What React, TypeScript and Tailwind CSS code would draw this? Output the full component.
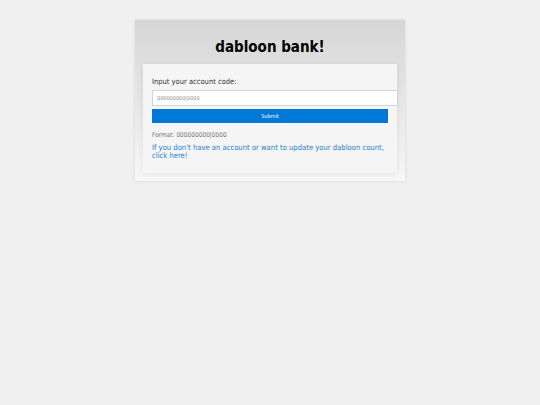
export default function App() {
  return (
    <div className="min-h-[405px] w-full bg-[#f0f0f0] pt-[20px] font-['DejaVu_Sans_Condensed','DejaVu_Sans',sans-serif]">
      <div className="mx-auto w-[270px] bg-gradient-to-b from-[#d6d6d6] to-[#f7f7f7] pt-[18px] pb-[8px] px-[8px] shadow-[0_0_3px_rgba(0,0,0,0.12)]">
        <h1 className="text-center text-[15px] leading-[19px] font-bold text-black">dabloon bank!</h1>
        <div className="mt-[7px] bg-[#f5f5f5] px-[9px] pt-[12px] pb-[13px] shadow-[0_1px_6px_rgba(0,0,0,0.08)]">
          <label className="block text-[7.5px] leading-[11px] text-[#333]">Input your account code:</label>
          <input
            type="text"
            placeholder="000000000|0000"
            className="mt-[3px] box-content block h-[14px] w-full border border-[#d4d4d4] bg-white px-[4px] text-[5.5px] text-[#555] placeholder:text-[#888] outline-none"
          />
          <button className="mt-[3px] block h-[14px] w-full bg-[#0078d7] text-[5.5px] text-white">Submit</button>
          <p className="mt-[8px] text-[6.5px] leading-[8px] text-[#777]">Format: 000000000|0000</p>
          <p className="mt-[5px] text-[7.6px] leading-[8px] text-[#1f80cc]">
            If you don't have an account or want to update your dabloon count, click here!
          </p>
        </div>
      </div>
    </div>
  );
}
